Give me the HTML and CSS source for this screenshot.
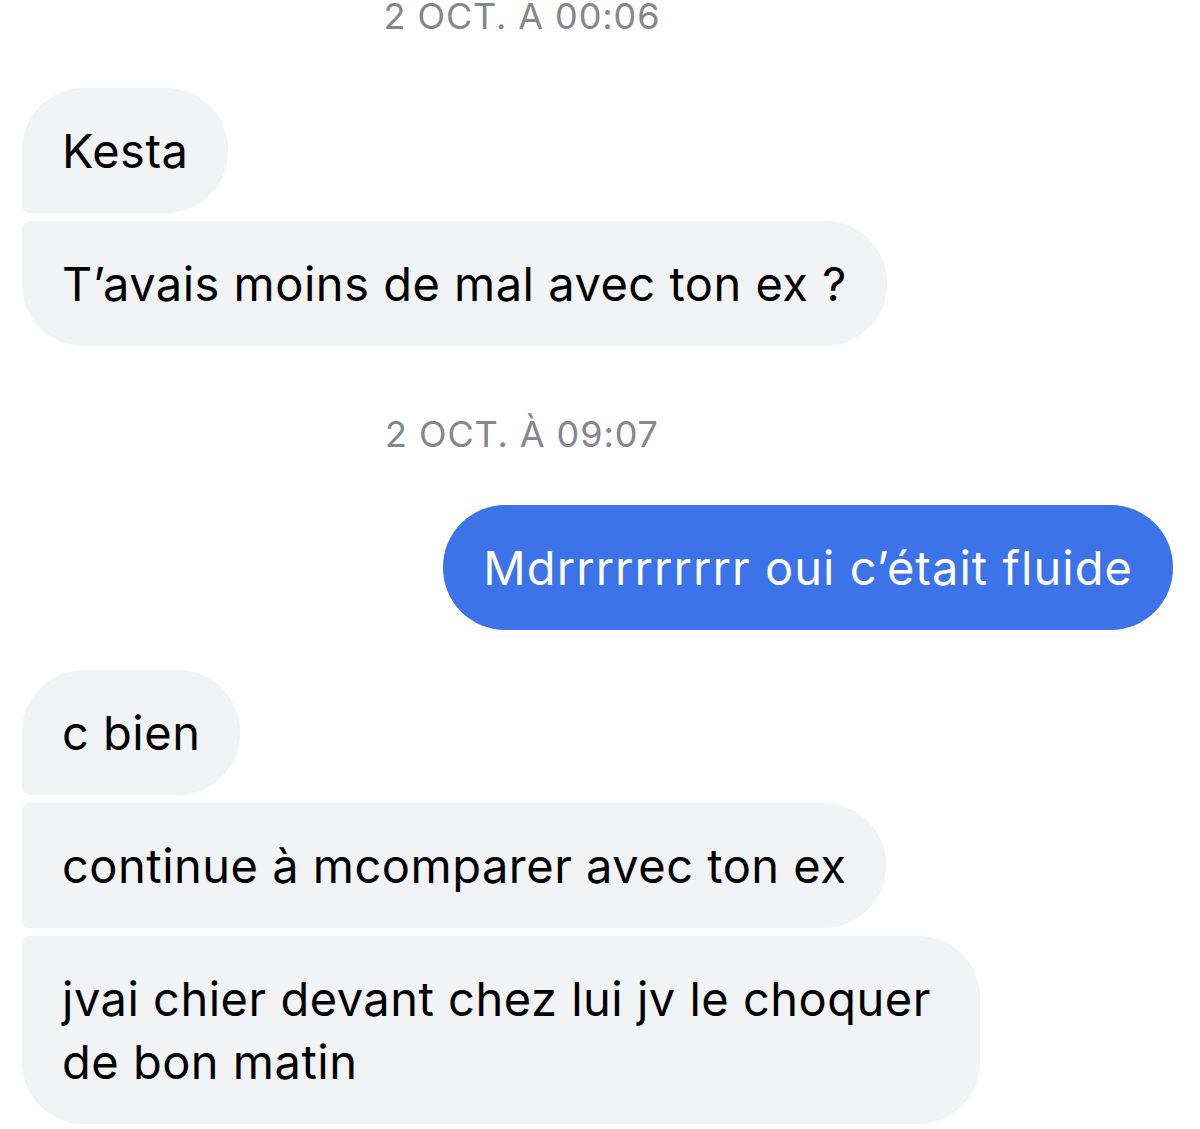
FILE: index.html
```html
<!DOCTYPE html>
<html lang="fr">
<head>
<meta charset="utf-8">
<link rel="stylesheet" href="styles.css">
</head>
<body>
<div class="chat">
  <div class="stamp stamp-first">2 OCT. A 00:06</div>
  <div class="group">
    <div class="bubble in first">Kesta</div>
    <div class="bubble in last">T’avais moins de mal avec ton ex ?</div>
  </div>
  <div class="stamp stamp-second">2 OCT. À 09:07</div>
  <div class="bubble out">Mdrrrrrrrrrr oui c’était fluide</div>
  <div class="group group-last">
    <div class="bubble in first">c bien</div>
    <div class="bubble in middle">continue à mcomparer avec ton ex</div>
    <div class="bubble in last">jvai chier devant chez lui jv le choquer de bon matin</div>
  </div>
</div>
</body>
</html>
```

FILE: styles.css
```css
html, body {
  margin: 0;
  padding: 0;
  background: #ffffff;
}
.chat {
  width: 1200px;
  height: 1129px;
  overflow: hidden;
  box-sizing: border-box;
  padding: 0 27px 0 22px;
  display: flex;
  flex-direction: column;
  font-family: Inter, "Liberation Sans", Arial, sans-serif;
}
.stamp {
  align-self: center;
  font-size: 36px;
  line-height: 40px;
  letter-spacing: 0.9px;
  color: #86868b;
  margin-right: 151px;
}
.stamp-first {
  margin-top: -4px;
}
.stamp-second {
  margin-top: 68px;
}
.group {
  display: flex;
  flex-direction: column;
  align-items: flex-start;
  gap: 8px;
  margin-top: 52px;
}
.group-last {
  margin-top: 40px;
}
.bubble {
  box-sizing: border-box;
  max-width: 958px;
  font-size: 47px;
  line-height: 63px;
  letter-spacing: 0.5px;
  padding: 31px 40px;
  border-radius: 62px;
}
.in {
  background: #f2f3f5;
  color: #000000;
}
.in.first {
  border-bottom-left-radius: 8px;
}
.in.middle {
  border-top-left-radius: 8px;
  border-bottom-left-radius: 8px;
}
.in.last {
  border-top-left-radius: 8px;
}
.out {
  align-self: flex-end;
  margin-top: 51px;
  letter-spacing: 1.05px;
  background: #3c73e9;
  color: #ffffff;
}
```
